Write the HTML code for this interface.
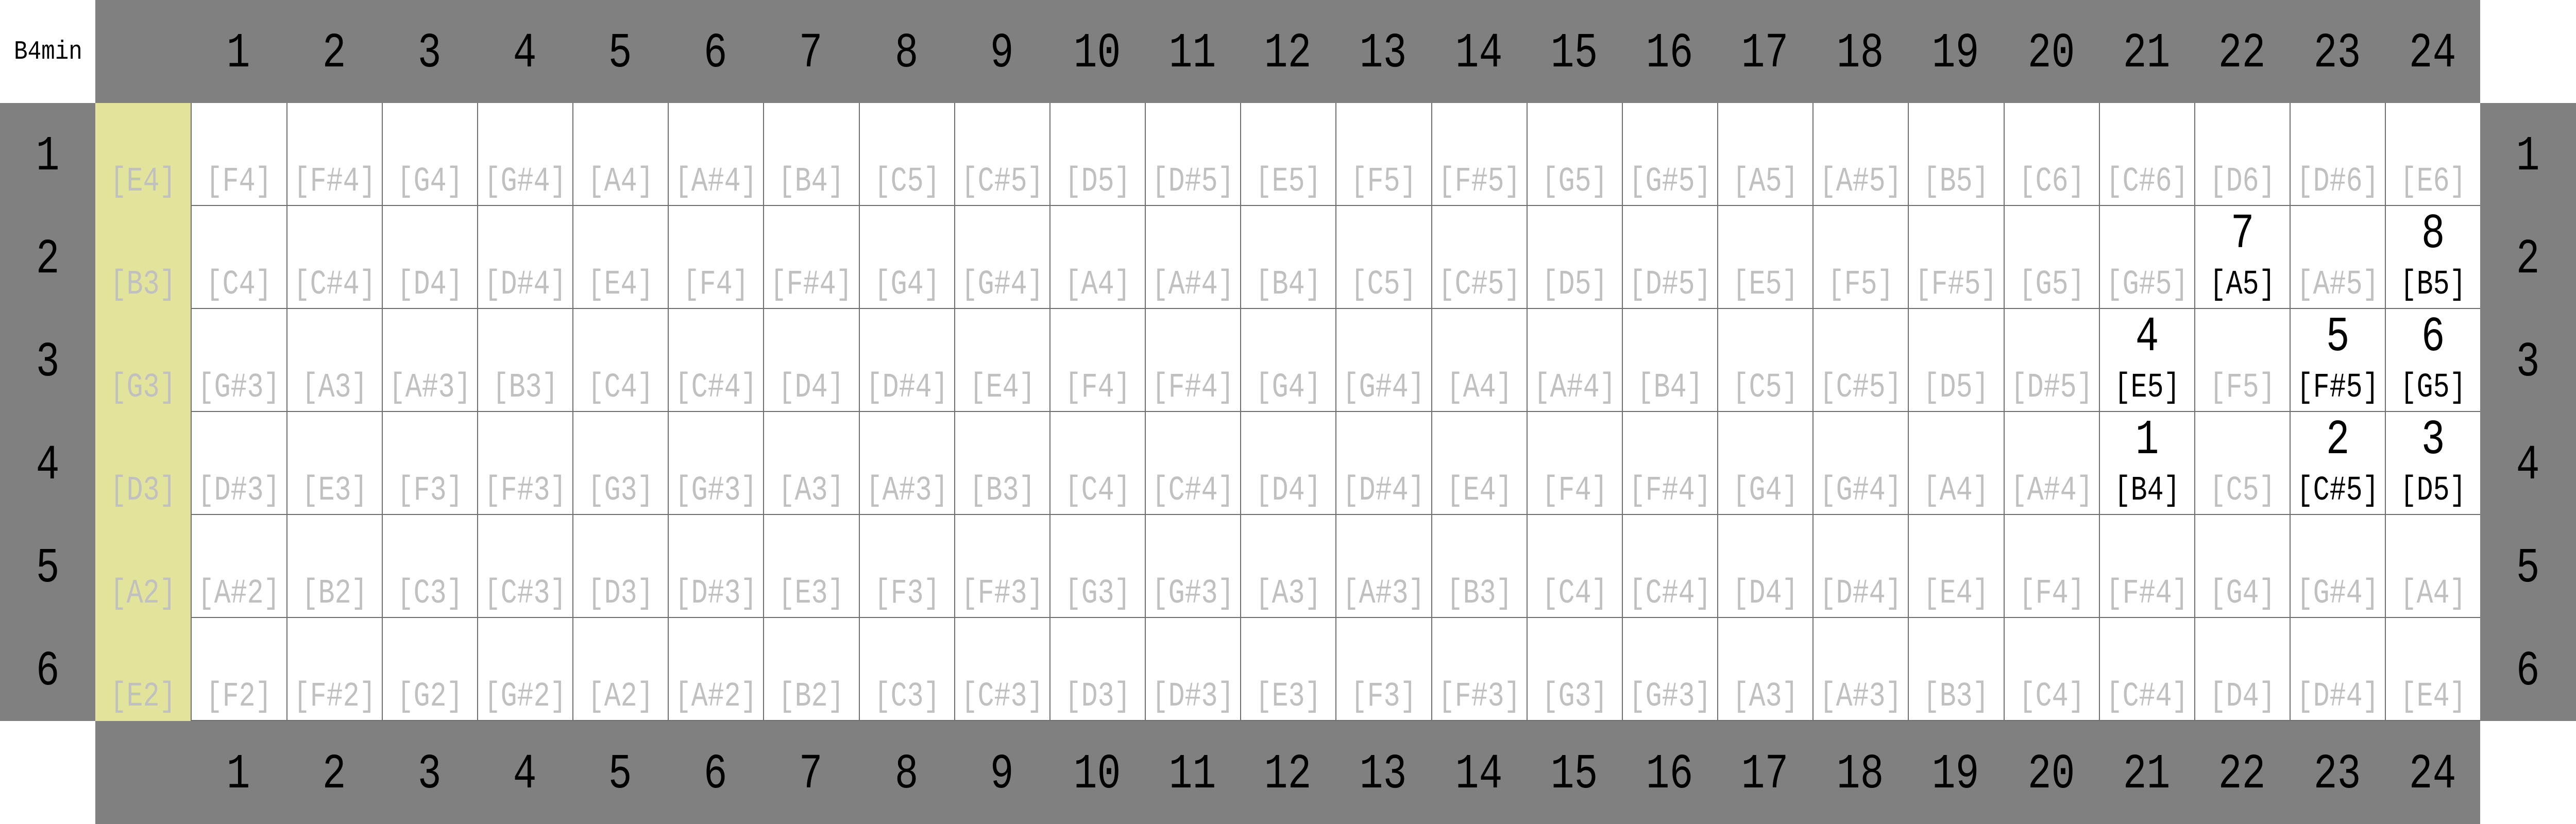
<!DOCTYPE html>
<html><head><meta charset="utf-8"><style>
*{margin:0;padding:0;box-sizing:border-box}
html,body{width:100vw;height:100vh;background:#fff;overflow:hidden}
#c{position:absolute;left:0;top:0;width:100vw;height:100vh;overflow:hidden;font-family:"Liberation Mono",monospace;color:#000}
#c>p{display:flex;width:100vw;height:12.5vh;overflow:hidden}
#c>p>i{position:relative;display:block;flex:none;width:calc(100vw / 27);height:12.5vh;overflow:hidden;font-style:normal}
.g{background:#808080}.w{background:#fff}.y{background:#e3e49b}
.f{background:#fff;border-left:2px solid #6e6e6e;border-bottom:2px solid #6e6e6e}
b{position:absolute;left:-30px;right:-30px;text-align:center;transform:scaleX(.8);white-space:nowrap;line-height:1;font-weight:normal}
.g b{font-size:1.907vw;top:3.56vh}
.l{font-size:1.333vw;top:7.56vh;color:#c0c0c0}
.f .k{color:#000}
.n{font-size:1.907vw;top:0.5vh}
.t{font-size:1.0185vw;top:4.81vh;left:0.537vw;right:auto;text-align:left;transform:scaleX(.87);transform-origin:left}
</style></head><body><div id="c">
<p><i class="w"><b class="t">B4min</b></i><i class="g"></i><i class="g"><b>1</b></i><i class="g"><b>2</b></i><i class="g"><b>3</b></i><i class="g"><b>4</b></i><i class="g"><b>5</b></i><i class="g"><b>6</b></i><i class="g"><b>7</b></i><i class="g"><b>8</b></i><i class="g"><b>9</b></i><i class="g"><b>10</b></i><i class="g"><b>11</b></i><i class="g"><b>12</b></i><i class="g"><b>13</b></i><i class="g"><b>14</b></i><i class="g"><b>15</b></i><i class="g"><b>16</b></i><i class="g"><b>17</b></i><i class="g"><b>18</b></i><i class="g"><b>19</b></i><i class="g"><b>20</b></i><i class="g"><b>21</b></i><i class="g"><b>22</b></i><i class="g"><b>23</b></i><i class="g"><b>24</b></i><i class="w"></i></p>

<p><i class="g"><b>1</b></i><i class="y"><b class="l">[E4]</b></i><i class="f"><b class="l">[F4]</b></i><i class="f"><b class="l">[F#4]</b></i><i class="f"><b class="l">[G4]</b></i><i class="f"><b class="l">[G#4]</b></i><i class="f"><b class="l">[A4]</b></i><i class="f"><b class="l">[A#4]</b></i><i class="f"><b class="l">[B4]</b></i><i class="f"><b class="l">[C5]</b></i><i class="f"><b class="l">[C#5]</b></i><i class="f"><b class="l">[D5]</b></i><i class="f"><b class="l">[D#5]</b></i><i class="f"><b class="l">[E5]</b></i><i class="f"><b class="l">[F5]</b></i><i class="f"><b class="l">[F#5]</b></i><i class="f"><b class="l">[G5]</b></i><i class="f"><b class="l">[G#5]</b></i><i class="f"><b class="l">[A5]</b></i><i class="f"><b class="l">[A#5]</b></i><i class="f"><b class="l">[B5]</b></i><i class="f"><b class="l">[C6]</b></i><i class="f"><b class="l">[C#6]</b></i><i class="f"><b class="l">[D6]</b></i><i class="f"><b class="l">[D#6]</b></i><i class="f"><b class="l">[E6]</b></i><i class="g"><b>1</b></i></p>

<p><i class="g"><b>2</b></i><i class="y"><b class="l">[B3]</b></i><i class="f"><b class="l">[C4]</b></i><i class="f"><b class="l">[C#4]</b></i><i class="f"><b class="l">[D4]</b></i><i class="f"><b class="l">[D#4]</b></i><i class="f"><b class="l">[E4]</b></i><i class="f"><b class="l">[F4]</b></i><i class="f"><b class="l">[F#4]</b></i><i class="f"><b class="l">[G4]</b></i><i class="f"><b class="l">[G#4]</b></i><i class="f"><b class="l">[A4]</b></i><i class="f"><b class="l">[A#4]</b></i><i class="f"><b class="l">[B4]</b></i><i class="f"><b class="l">[C5]</b></i><i class="f"><b class="l">[C#5]</b></i><i class="f"><b class="l">[D5]</b></i><i class="f"><b class="l">[D#5]</b></i><i class="f"><b class="l">[E5]</b></i><i class="f"><b class="l">[F5]</b></i><i class="f"><b class="l">[F#5]</b></i><i class="f"><b class="l">[G5]</b></i><i class="f"><b class="l">[G#5]</b></i><i class="f"><b class="n">7</b><b class="l k">[A5]</b></i><i class="f"><b class="l">[A#5]</b></i><i class="f"><b class="n">8</b><b class="l k">[B5]</b></i><i class="g"><b>2</b></i></p>

<p><i class="g"><b>3</b></i><i class="y"><b class="l">[G3]</b></i><i class="f"><b class="l">[G#3]</b></i><i class="f"><b class="l">[A3]</b></i><i class="f"><b class="l">[A#3]</b></i><i class="f"><b class="l">[B3]</b></i><i class="f"><b class="l">[C4]</b></i><i class="f"><b class="l">[C#4]</b></i><i class="f"><b class="l">[D4]</b></i><i class="f"><b class="l">[D#4]</b></i><i class="f"><b class="l">[E4]</b></i><i class="f"><b class="l">[F4]</b></i><i class="f"><b class="l">[F#4]</b></i><i class="f"><b class="l">[G4]</b></i><i class="f"><b class="l">[G#4]</b></i><i class="f"><b class="l">[A4]</b></i><i class="f"><b class="l">[A#4]</b></i><i class="f"><b class="l">[B4]</b></i><i class="f"><b class="l">[C5]</b></i><i class="f"><b class="l">[C#5]</b></i><i class="f"><b class="l">[D5]</b></i><i class="f"><b class="l">[D#5]</b></i><i class="f"><b class="n">4</b><b class="l k">[E5]</b></i><i class="f"><b class="l">[F5]</b></i><i class="f"><b class="n">5</b><b class="l k">[F#5]</b></i><i class="f"><b class="n">6</b><b class="l k">[G5]</b></i><i class="g"><b>3</b></i></p>

<p><i class="g"><b>4</b></i><i class="y"><b class="l">[D3]</b></i><i class="f"><b class="l">[D#3]</b></i><i class="f"><b class="l">[E3]</b></i><i class="f"><b class="l">[F3]</b></i><i class="f"><b class="l">[F#3]</b></i><i class="f"><b class="l">[G3]</b></i><i class="f"><b class="l">[G#3]</b></i><i class="f"><b class="l">[A3]</b></i><i class="f"><b class="l">[A#3]</b></i><i class="f"><b class="l">[B3]</b></i><i class="f"><b class="l">[C4]</b></i><i class="f"><b class="l">[C#4]</b></i><i class="f"><b class="l">[D4]</b></i><i class="f"><b class="l">[D#4]</b></i><i class="f"><b class="l">[E4]</b></i><i class="f"><b class="l">[F4]</b></i><i class="f"><b class="l">[F#4]</b></i><i class="f"><b class="l">[G4]</b></i><i class="f"><b class="l">[G#4]</b></i><i class="f"><b class="l">[A4]</b></i><i class="f"><b class="l">[A#4]</b></i><i class="f"><b class="n">1</b><b class="l k">[B4]</b></i><i class="f"><b class="l">[C5]</b></i><i class="f"><b class="n">2</b><b class="l k">[C#5]</b></i><i class="f"><b class="n">3</b><b class="l k">[D5]</b></i><i class="g"><b>4</b></i></p>

<p><i class="g"><b>5</b></i><i class="y"><b class="l">[A2]</b></i><i class="f"><b class="l">[A#2]</b></i><i class="f"><b class="l">[B2]</b></i><i class="f"><b class="l">[C3]</b></i><i class="f"><b class="l">[C#3]</b></i><i class="f"><b class="l">[D3]</b></i><i class="f"><b class="l">[D#3]</b></i><i class="f"><b class="l">[E3]</b></i><i class="f"><b class="l">[F3]</b></i><i class="f"><b class="l">[F#3]</b></i><i class="f"><b class="l">[G3]</b></i><i class="f"><b class="l">[G#3]</b></i><i class="f"><b class="l">[A3]</b></i><i class="f"><b class="l">[A#3]</b></i><i class="f"><b class="l">[B3]</b></i><i class="f"><b class="l">[C4]</b></i><i class="f"><b class="l">[C#4]</b></i><i class="f"><b class="l">[D4]</b></i><i class="f"><b class="l">[D#4]</b></i><i class="f"><b class="l">[E4]</b></i><i class="f"><b class="l">[F4]</b></i><i class="f"><b class="l">[F#4]</b></i><i class="f"><b class="l">[G4]</b></i><i class="f"><b class="l">[G#4]</b></i><i class="f"><b class="l">[A4]</b></i><i class="g"><b>5</b></i></p>

<p><i class="g"><b>6</b></i><i class="y"><b class="l">[E2]</b></i><i class="f"><b class="l">[F2]</b></i><i class="f"><b class="l">[F#2]</b></i><i class="f"><b class="l">[G2]</b></i><i class="f"><b class="l">[G#2]</b></i><i class="f"><b class="l">[A2]</b></i><i class="f"><b class="l">[A#2]</b></i><i class="f"><b class="l">[B2]</b></i><i class="f"><b class="l">[C3]</b></i><i class="f"><b class="l">[C#3]</b></i><i class="f"><b class="l">[D3]</b></i><i class="f"><b class="l">[D#3]</b></i><i class="f"><b class="l">[E3]</b></i><i class="f"><b class="l">[F3]</b></i><i class="f"><b class="l">[F#3]</b></i><i class="f"><b class="l">[G3]</b></i><i class="f"><b class="l">[G#3]</b></i><i class="f"><b class="l">[A3]</b></i><i class="f"><b class="l">[A#3]</b></i><i class="f"><b class="l">[B3]</b></i><i class="f"><b class="l">[C4]</b></i><i class="f"><b class="l">[C#4]</b></i><i class="f"><b class="l">[D4]</b></i><i class="f"><b class="l">[D#4]</b></i><i class="f"><b class="l">[E4]</b></i><i class="g"><b>6</b></i></p>

<p><i class="w"></i><i class="g"></i><i class="g"><b>1</b></i><i class="g"><b>2</b></i><i class="g"><b>3</b></i><i class="g"><b>4</b></i><i class="g"><b>5</b></i><i class="g"><b>6</b></i><i class="g"><b>7</b></i><i class="g"><b>8</b></i><i class="g"><b>9</b></i><i class="g"><b>10</b></i><i class="g"><b>11</b></i><i class="g"><b>12</b></i><i class="g"><b>13</b></i><i class="g"><b>14</b></i><i class="g"><b>15</b></i><i class="g"><b>16</b></i><i class="g"><b>17</b></i><i class="g"><b>18</b></i><i class="g"><b>19</b></i><i class="g"><b>20</b></i><i class="g"><b>21</b></i><i class="g"><b>22</b></i><i class="g"><b>23</b></i><i class="g"><b>24</b></i><i class="w"></i></p>
</div></body></html>
